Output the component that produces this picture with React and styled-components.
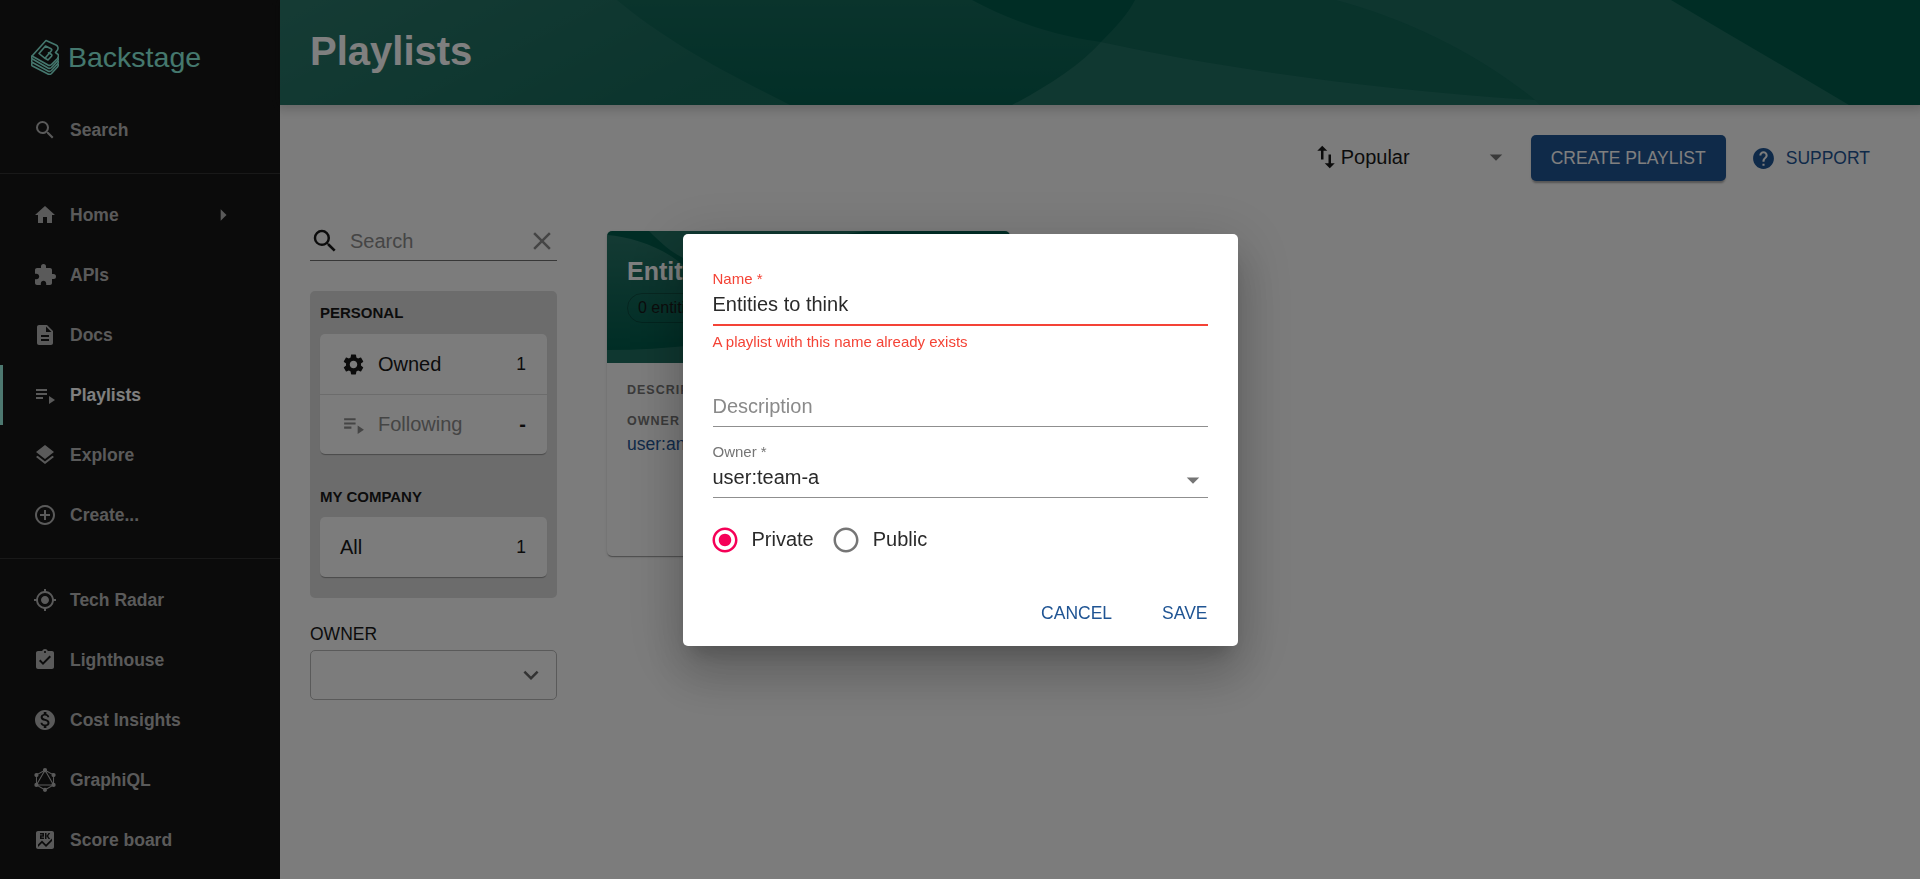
import React from 'react';
import styled, {createGlobalStyle} from 'styled-components';
import {
	MdSearch, MdHome, MdExtension, MdDescription, MdPlaylistPlay, MdLayers,
	MdAddCircleOutline, MdMyLocation, MdAssignmentTurnedIn, MdMonetizationOn,
	MdScore, MdArrowRight, MdArrowDropDown, MdImportExport, MdHelp, MdClear,
	MdSettings, MdExpandMore, MdRadioButtonChecked, MdRadioButtonUnchecked,
} from 'react-icons/md';
import {SiGraphql} from 'react-icons/si';

const top_items = [
	{label: 'Home', icon: MdHome, arrow: true},
	{label: 'APIs', icon: MdExtension},
	{label: 'Docs', icon: MdDescription},
	{label: 'Playlists', icon: MdPlaylistPlay, active: true},
	{label: 'Explore', icon: MdLayers},
	{label: 'Create...', icon: MdAddCircleOutline},
];

const bottom_items = [
	{label: 'Tech Radar', icon: MdMyLocation},
	{label: 'Lighthouse', icon: MdAssignmentTurnedIn},
	{label: 'Cost Insights', icon: MdMonetizationOn},
	{label: 'GraphiQL', icon: SiGraphql},
	{label: 'Score board', icon: MdScore},
];

function NavItem({item}) {
	const Icon = item.icon;
	return (
		<NavRow $active={item.active}>
			<NavIcon><Icon size={24} /></NavIcon>
			<NavLabel>{item.label}</NavLabel>
			{item.arrow && <NavArrow><MdArrowRight size={28} /></NavArrow>}
		</NavRow>
	);
}

function Logo() {
	return (
		<LogoMark viewBox="0 0 28 36" fill="none" stroke="currentColor" strokeWidth="1.6" strokeLinejoin="round" strokeLinecap="round">
			<path d="M1 17 15 1.500 25 6c2 1 2.500 3 1.500 5l-2 2.500 2 1.500c1.500 1 1 3 0 4.500l-6 6c-1 1-2.500 1-3.500.5z" />
			<path d="M8 14.500 14.500 7l5.500 2.700c1 .5 1 1.300.4 2L14 19.300zM14 19.300l3 1.700 3.500-3.800c.6-.7.5-1.400-.3-1.900l-2.700-1.500" />
			<path d="M1 17c-.6 1.500-.4 2.500.5 3L17 29c1 .5 2.500.5 3.500-.5l6-6.500c1-1.200 1-2 .5-3" />
			<path d="M1 20.500c-.6 1.500-.4 2.500.5 3L17 32c1 .5 2.500.5 3.500-.5l6-6.500c1-1.200 1-2 .5-3" />
			<path d="M1 24c-.6 1.500-.4 2.500.5 3L17 35c1 .5 2.500.5 3.500-.5l6-6.500c1-1.200 1-2 .5-3" />
		</LogoMark>
	);
}

function HeaderWave() {
	return (
		<WaveLayer viewBox="0 0 1640 105" preserveAspectRatio="none">
			<defs>
				<linearGradient id="wave_left" x1="0" y1="0" x2="1" y2="0.4">
					<stop offset="0" stopColor="#fff" stopOpacity=".17" />
					<stop offset="1" stopColor="#fff" stopOpacity=".09" />
				</linearGradient>
				<linearGradient id="wave_mid" x1="0" y1="0" x2="0" y2="1">
					<stop offset="0" stopColor="#fff" stopOpacity=".08" />
					<stop offset="1" stopColor="#fff" stopOpacity=".02" />
				</linearGradient>
			</defs>
			<path fill="url(#wave_left)" d="M0 0H337C385 40 440 70 510 105H0Z" />
			<path fill="url(#wave_mid)" d="M337 0H692C730 20 770 35 821 42C800 65 770 85 732 105H510C440 70 385 40 337 0Z" />
			<path fill="#fff" fillOpacity=".07" d="M855 0H1056C1130 20 1200 55 1255 100C1100 90 950 70 821 42C835 28 848 14 855 0Z" />
			<path fill="#fff" fillOpacity=".13" d="M821 42C950 70 1100 90 1255 100L1260 105H732C770 85 800 65 821 42Z" />
			<path fill="#fff" fillOpacity=".11" d="M1056 0H1391C1450 35 1510 70 1569 105H1260L1255 100C1200 55 1130 20 1056 0Z" />
		</WaveLayer>
	);
}

function CardWave() {
	return (
		<WaveLayer viewBox="0 0 403 132" preserveAspectRatio="none">
			<defs>
				<linearGradient id="card_fade" x1="0" y1="0" x2="0" y2="1">
					<stop offset="0" stopColor="#fff" stopOpacity=".16" />
					<stop offset="1" stopColor="#fff" stopOpacity="0" />
				</linearGradient>
			</defs>
			<path fill="url(#card_fade)" d="M0 4C25 6 55 16 76 34L403 50V118H0Z" />
			<path fill="#fff" fillOpacity=".13" d="M42 0C52 10 62 20 76 27L260 0Z" />
			<path fill="#fff" fillOpacity=".12" d="M0 119C30 119 60 117 90 114L403 90V132H0Z" />
		</WaveLayer>
	);
}

export default function App() {
	return (
		<>
			<GlobalStyle />
			<Shell>
				<Sidebar>
					<LogoRow>
						<Logo />
						<LogoText>Backstage</LogoText>
					</LogoRow>
					<NavItem item={{label: 'Search', icon: MdSearch}} />
					<NavDivider />
					{top_items.map(item => <NavItem key={item.label} item={item} />)}
					<NavDivider />
					{bottom_items.map(item => <NavItem key={item.label} item={item} />)}
				</Sidebar>
				<Main>
					<PageHeader>
						<HeaderWave />
						<PageTitle>Playlists</PageTitle>
					</PageHeader>
					<Content>
						<Toolbar>
							<SortSelect>
								<MdImportExport size={30} />
								<SortText>Popular</SortText>
								<SortArrow><MdArrowDropDown size={30} /></SortArrow>
							</SortSelect>
							<CreateButton>CREATE PLAYLIST</CreateButton>
							<SupportLink>
								<MdHelp size={25} />
								<span>SUPPORT</span>
							</SupportLink>
						</Toolbar>
						<Body>
							<Filters>
								<SearchBox>
									<MdSearch size={30} />
									<SearchText>Search</SearchText>
									<ClearIcon><MdClear size={30} /></ClearIcon>
								</SearchBox>
								<FilterGroup>
									<GroupTitle>PERSONAL</GroupTitle>
									<FilterCard>
										<FilterRow>
											<FilterIcon><MdSettings size={25} /></FilterIcon>
											<FilterName>Owned</FilterName>
											<FilterCount>1</FilterCount>
										</FilterRow>
										<FilterRow $muted $divided>
											<FilterIcon><MdPlaylistPlay size={25} /></FilterIcon>
											<FilterName>Following</FilterName>
											<FilterCount $dash>-</FilterCount>
										</FilterRow>
									</FilterCard>
									<GroupTitle $second>MY COMPANY</GroupTitle>
									<FilterCard>
										<FilterRow $plain>
											<FilterName>All</FilterName>
											<FilterCount>1</FilterCount>
										</FilterRow>
									</FilterCard>
								</FilterGroup>
								<OwnerLabel>OWNER</OwnerLabel>
								<OwnerSelect>
									<MdExpandMore size={30} />
								</OwnerSelect>
							</Filters>
							<PlaylistCard>
								<CardHead>
									<CardWave />
									<CardTitle>Entities to think</CardTitle>
									<Chip>0 entities</Chip>
								</CardHead>
								<CardBody>
									<Overline>DESCRIPTION</Overline>
									<Overline $owner>OWNER</Overline>
									<CardLink>user:andrew</CardLink>
								</CardBody>
							</PlaylistCard>
						</Body>
					</Content>
				</Main>
			</Shell>
			<Backdrop>
				<Dialog>
					<FieldLabel $error>Name *</FieldLabel>
					<FieldValue $error>Entities to think</FieldValue>
					<HelperText>A playlist with this name already exists</HelperText>
					<FieldValue $placeholder $gap={39}>Description</FieldValue>
					<FieldLabel $gap={16}>Owner *</FieldLabel>
					<FieldValue>
						user:team-a
						<FieldArrow><MdArrowDropDown size={30} /></FieldArrow>
					</FieldValue>
					<RadioRow>
						<RadioItem $checked>
							<MdRadioButtonChecked size={30} />
							<span>Private</span>
						</RadioItem>
						<RadioItem>
							<MdRadioButtonUnchecked size={30} />
							<span>Public</span>
						</RadioItem>
					</RadioRow>
					<DialogActions>
						<TextButton>CANCEL</TextButton>
						<TextButton>SAVE</TextButton>
					</DialogActions>
				</Dialog>
			</Backdrop>
		</>
	);
}

const GlobalStyle = createGlobalStyle`
	html, body {
		margin: 0;
		height: 100%;
		overflow: hidden;
		background: #f8f8f8;
		font-family: "Liberation Sans", Arial, sans-serif;
	}

	* {
		box-sizing: border-box;
	}
`;

const Shell = styled.div`
	display: flex;
	height: 879px;
	overflow: hidden;
`;

const Sidebar = styled.nav`
	flex: none;
	width: 280px;
	background: #171717;
	color: #b5b5b5;
`;

const LogoRow = styled.div`
	display: flex;
	align-items: center;
	gap: 9px;
	height: 100px;
	padding: 13px 0 0 31px;
	color: #8af0dd;
`;

const LogoMark = styled.svg`
	width: 28px;
	height: 36px;
`;

const LogoText = styled.div`
	font-size: 28.5px;
	line-height: 36px;
`;

const NavRow = styled.div`
	display: flex;
	align-items: center;
	height: 60px;
	color: ${props => props.$active ? '#fff' : '#b5b5b5'};
	border-left: ${props => props.$active ? '3px solid #9bf0e1' : 'none'};
	padding-left: ${props => props.$active ? '27px' : '30px'};
`;

const NavIcon = styled.div`
	display: flex;
	align-items: center;
	justify-content: center;
	width: 30px;
	height: 30px;
	color: #b5b5b5;
`;

const NavLabel = styled.div`
	margin-left: 10px;
	font-size: 17.5px;
	font-weight: 700;
`;

const NavArrow = styled.div`
	display: flex;
	margin-left: auto;
	margin-right: 43px;
`;

const NavDivider = styled.div`
	height: 1px;
	margin: 13px 0 11px;
	background: rgba(255, 255, 255, 0.12);
`;

const Main = styled.main`
	flex: 1;
	min-width: 0;
`;

const PageHeader = styled.header`
	position: relative;
	display: flex;
	align-items: center;
	height: 105px;
	padding: 0 0 4px 30px;
	background: #005b4b;
	box-shadow: 0 0 10px 4px rgba(20, 20, 20, 0.2);
`;

const WaveLayer = styled.svg`
	position: absolute;
	top: 0;
	left: 0;
	width: 100%;
	height: 100%;
`;

const PageTitle = styled.h1`
	position: relative;
	margin: 0;
	color: #fff;
	font-size: 40px;
	font-weight: 700;
	line-height: 50px;
`;

const Content = styled.div`
	padding: 30px 50px 0 30px;
`;

const Toolbar = styled.div`
	display: flex;
	align-items: center;
	justify-content: flex-end;
	height: 46px;
`;

const SortSelect = styled.div`
	display: flex;
	align-items: center;
	width: 200px;
	padding-bottom: 2px;
	color: #181818;
`;

const SortText = styled.span`
	font-size: 20px;
`;

const SortArrow = styled.span`
	display: flex;
	margin-left: auto;
	color: #757575;
`;

const CreateButton = styled.button`
	width: 195px;
	height: 46px;
	margin-left: 20px;
	border: 0;
	border-radius: 5px;
	background: #1f5493;
	color: #fff;
	font: inherit;
	font-size: 17.5px;
	box-shadow: 0 4px 2px -2px rgba(0, 0, 0, 0.2), 0 2px 2px 0 rgba(0, 0, 0, 0.14);
`;

const SupportLink = styled.div`
	display: flex;
	align-items: center;
	gap: 10px;
	margin-left: 25px;
	color: #1f5493;
	font-size: 17.5px;
`;

const Body = styled.div`
	display: flex;
	gap: 50px;
	margin-top: 44px;
`;

const Filters = styled.aside`
	flex: none;
	width: 247px;
`;

const SearchBox = styled.div`
	display: flex;
	align-items: center;
	height: 36px;
	padding-bottom: 3px;
	border-bottom: 1px solid #6f6f6f;
	color: #181818;
`;

const SearchText = styled.span`
	margin-left: 10px;
	color: #8a8a8a;
	font-size: 20px;
`;

const ClearIcon = styled.span`
	display: flex;
	margin-left: auto;
	color: #8a8a8a;
`;

const FilterGroup = styled.div`
	height: 307px;
	margin-top: 30px;
	padding: 10px;
	border-radius: 5px;
	background: #d9d9d9;
`;

const GroupTitle = styled.div`
	height: ${props => props.$second ? '32px' : '33px'};
	margin-top: ${props => props.$second ? '31px' : '0'};
	color: #181818;
	font-size: 15px;
	font-weight: 700;
	line-height: 24px;
`;

const FilterCard = styled.div`
	border-radius: 5px;
	background: #f8f8f8;
	box-shadow: 0 2px 1px -1px rgba(0, 0, 0, 0.2), 0 1px 1px 0 rgba(0, 0, 0, 0.14);
`;

const FilterRow = styled.div`
	display: flex;
	align-items: center;
	height: 60px;
	padding: ${props => props.$plain ? '0 21px 0 20px' : '0 21px'};
	border-top: ${props => props.$divided ? '1px solid rgba(0, 0, 0, 0.12)' : 'none'};
	color: ${props => props.$muted ? '#8a8a8a' : '#181818'};
`;

const FilterIcon = styled.span`
	display: flex;
	width: 37px;
`;

const FilterName = styled.span`
	font-size: 20px;
`;

const FilterCount = styled.span`
	margin-left: auto;
	color: #181818;
	font-size: ${props => props.$dash ? '20px' : '17.5px'};
	font-weight: ${props => props.$dash ? 700 : 400};
`;

const OwnerLabel = styled.div`
	margin-top: 26px;
	color: #181818;
	font-size: 17.5px;
	line-height: 20px;
`;

const OwnerSelect = styled.div`
	display: flex;
	align-items: center;
	justify-content: flex-end;
	height: 50px;
	margin-top: 6px;
	padding-right: 10px;
	border: 1.25px solid #b5b5b5;
	border-radius: 5px;
	color: #666;
`;

const PlaylistCard = styled.article`
	width: 403px;
	height: 325px;
	margin-top: 6px;
	border-radius: 5px;
	background: #f8f8f8;
	box-shadow: 0 2px 1px -1px rgba(0, 0, 0, 0.2), 0 1px 1px 0 rgba(0, 0, 0, 0.14), 0 1px 3px 0 rgba(0, 0, 0, 0.12);
`;

const CardHead = styled.div`
	position: relative;
	height: 132px;
	padding: 26px 20px 0;
	overflow: hidden;
	border-radius: 5px 5px 0 0;
	background: #005b4b;
`;

const CardTitle = styled.div`
	position: relative;
	color: #fff;
	font-size: 25px;
	font-weight: 700;
	line-height: 28px;
`;

const Chip = styled.div`
	position: relative;
	display: inline-flex;
	align-items: center;
	height: 30px;
	margin-top: 8px;
	padding: 0 10px;
	border: 1px solid rgba(0, 0, 0, 0.25);
	border-radius: 15px;
	color: #181818;
	font-size: 16px;
`;

const CardBody = styled.div`
	padding: 19px 20px 0;
`;

const Overline = styled.div`
	margin-top: ${props => props.$owner ? '15px' : '0'};
	color: #757575;
	font-size: 12.5px;
	font-weight: 700;
	letter-spacing: 1px;
	line-height: 16px;
`;

const CardLink = styled.div`
	margin-top: 3px;
	color: #1f5493;
	font-size: 17.5px;
	line-height: 24px;
`;

const Backdrop = styled.div`
	position: fixed;
	top: 0;
	right: 0;
	bottom: 0;
	left: 0;
	display: flex;
	align-items: center;
	justify-content: center;
	background: rgba(0, 0, 0, 0.5);
`;

const Dialog = styled.div`
	width: 555px;
	height: 412px;
	padding: 36px 30px 15px;
	border-radius: 5px;
	background: #fff;
	box-shadow: 0 14px 19px -9px rgba(0, 0, 0, 0.2), 0 30px 47px 4px rgba(0, 0, 0, 0.14), 0 11px 57px 10px rgba(0, 0, 0, 0.12);
`;

const FieldLabel = styled.div`
	margin-top: ${props => props.$gap || 0}px;
	color: ${props => props.$error ? '#f44336' : '#757575'};
	font-size: 15px;
	line-height: 18px;
`;

const FieldValue = styled.div`
	position: relative;
	height: ${props => props.$error ? '38px' : '37px'};
	margin-top: ${props => props.$gap || 0}px;
	border-bottom: ${props => props.$error ? '2px solid #f44336' : '1px solid #8f8f8f'};
	color: ${props => props.$placeholder ? '#8a8a8a' : '#2a2a2a'};
	font-size: 20px;
	line-height: 32px;
`;

const FieldArrow = styled.span`
	position: absolute;
	top: 4px;
	right: 0;
	display: flex;
	color: #757575;
`;

const HelperText = styled.div`
	margin-top: 7px;
	color: #f44336;
	font-size: 15px;
	line-height: 18px;
`;

const RadioRow = styled.div`
	display: flex;
	gap: 17px;
	margin: 27px 0 0 -3px;
`;

const RadioItem = styled.label`
	display: flex;
	align-items: center;
	gap: 12px;
	color: #2a2a2a;
	font-size: 20px;

	svg {
		color: ${props => props.$checked ? '#f50057' : '#757575'};
	}
`;

const DialogActions = styled.div`
	display: flex;
	justify-content: flex-end;
	gap: 50px;
	margin-top: 40px;
`;

const TextButton = styled.span`
	color: #1f5493;
	font-size: 17.5px;
	line-height: 36px;
`;
